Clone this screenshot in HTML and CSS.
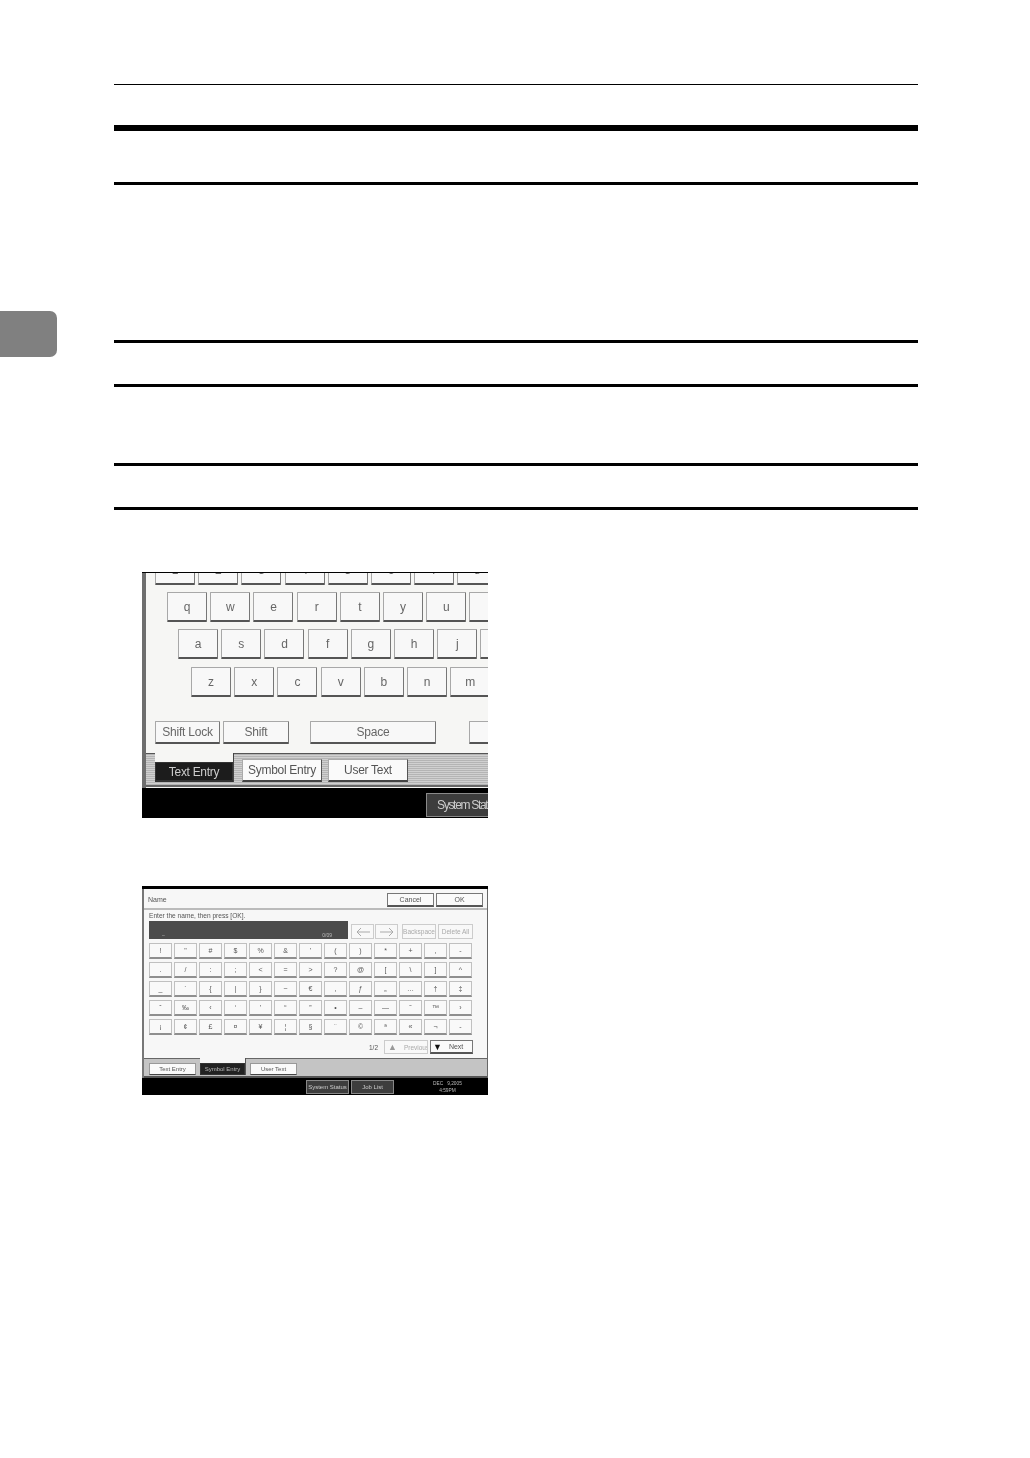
FILE: index.html
```html
<!DOCTYPE html>
<html lang="en">
<head>
<meta charset="utf-8">
<title>Symbol Entry</title>
<link rel="stylesheet" href="styles.css">
</head>
<body>
<div class="page">
  <aside class="gutter"><div class="thumb-tab"></div></aside>
  <main class="content">
    <div class="rule thin"></div>
    <div class="rule heavy"></div>
    <div class="rule r1"></div>
    <div class="rule r2"></div>
    <div class="rule r3"></div>
    <div class="rule r4"></div>
    <div class="rule r5"></div>

    <section class="screen big">
      <div class="panel">
        <div class="kb-row row1"><span class="key">1</span><span class="key">2</span><span class="key">3</span><span class="key">4</span><span class="key">5</span><span class="key">6</span><span class="key">7</span><span class="key">8</span></div>
        <div class="kb-row row2"><span class="key">q</span><span class="key">w</span><span class="key">e</span><span class="key">r</span><span class="key">t</span><span class="key">y</span><span class="key">u</span><span class="key"></span></div>
        <div class="kb-row row3"><span class="key">a</span><span class="key">s</span><span class="key">d</span><span class="key">f</span><span class="key">g</span><span class="key">h</span><span class="key">j</span><span class="key"></span></div>
        <div class="kb-row row4"><span class="key">z</span><span class="key">x</span><span class="key">c</span><span class="key">v</span><span class="key">b</span><span class="key">n</span><span class="key">m</span></div>
        <div class="mod-row">
          <span class="key lock">Shift Lock</span>
          <span class="key shift">Shift</span>
          <span class="key space">Space</span>
          <span class="key extra"></span>
        </div>
        <div class="tabbar">
          <div class="notch"><span class="tab on">Text Entry</span></div>
          <span class="tab sym">Symbol Entry</span>
          <span class="tab usr">User Text</span>
        </div>
      </div>
      <div class="status"><span class="status-btn">System Status</span></div>
    </section>

    <section class="screen small">
      <div class="panel">
        <header class="title">
          <span class="title-name">Name</span>
          <span class="act cancel">Cancel</span>
          <span class="act ok">OK</span>
        </header>
        <div class="body">
          <div class="prompt">Enter the name, then press [OK].</div>
          <div class="entry-row">
            <div class="entry"><span>–</span><span class="count">0/09</span></div>
            <span class="soft arrow"><svg viewBox="0 0 16 10" class="arrow-icon"><path d="M15 5H2M6 1 2 5l4 4"/></svg></span>
            <span class="soft arrow"><svg viewBox="0 0 16 10" class="arrow-icon"><path d="M1 5h13M10 1l4 4-4 4"/></svg></span>
            <span class="soft back">Backspace</span>
            <span class="soft del">Delete All</span>
          </div>
          <div class="sym-grid">
            <span class="k">!</span><span class="k">"</span><span class="k">#</span><span class="k">$</span><span class="k">%</span><span class="k">&amp;</span><span class="k">'</span><span class="k">(</span><span class="k">)</span><span class="k">*</span><span class="k">+</span><span class="k">,</span><span class="k">-</span>
            <span class="k">.</span><span class="k">/</span><span class="k">:</span><span class="k">;</span><span class="k">&lt;</span><span class="k">=</span><span class="k">&gt;</span><span class="k">?</span><span class="k">@</span><span class="k">[</span><span class="k">\</span><span class="k">]</span><span class="k">^</span>
            <span class="k">_</span><span class="k">`</span><span class="k">{</span><span class="k">|</span><span class="k">}</span><span class="k">~</span><span class="k">€</span><span class="k">‚</span><span class="k">ƒ</span><span class="k">„</span><span class="k">…</span><span class="k">†</span><span class="k">‡</span>
            <span class="k">ˆ</span><span class="k">‰</span><span class="k">‹</span><span class="k">‘</span><span class="k">’</span><span class="k">“</span><span class="k">”</span><span class="k">•</span><span class="k">–</span><span class="k">—</span><span class="k">˜</span><span class="k">™</span><span class="k">›</span>
            <span class="k">¡</span><span class="k">¢</span><span class="k">£</span><span class="k">¤</span><span class="k">¥</span><span class="k">¦</span><span class="k">§</span><span class="k">¨</span><span class="k">©</span><span class="k">ª</span><span class="k">«</span><span class="k">¬</span><span class="k">-</span>
          </div>
          <div class="pager">
            <span class="page-no">1/2</span>
            <span class="soft prev"><b class="tri">▲</b>Previous</span>
            <span class="act next"><b class="tri dark">▼</b>Next</span>
          </div>
        </div>
        <div class="tabbar2">
          <span class="tab2">Text Entry</span>
          <div class="notch2"><span class="tab2 on">Symbol Entry</span></div>
          <span class="tab2">User Text</span>
        </div>
      </div>
      <div class="status2">
        <span class="status-btn2">System Status</span>
        <span class="status-btn2">Job List</span>
        <span class="clock">DEC&nbsp;&nbsp;&nbsp;9,2005<br>4:59PM</span>
      </div>
    </section>
  </main>
</div>
</body>
</html>
```
FILE: styles.css
```css
* { box-sizing: border-box; }
html, body { margin: 0; background: #fff; }
body { font-family: "Liberation Sans", "DejaVu Sans", sans-serif; color: #333; }

.page { display: flex; min-height: 1458px; }
.gutter { width: 114px; flex: none; padding-top: 311px; }
.thumb-tab { width: 57px; height: 46px; background: #808080; border-radius: 0 7px 7px 0; }
.content { width: 804px; flex: none; padding-top: 84px; }

.rule { background: #000; height: 3px; }
.thin { height: 1px; }
.heavy { height: 6px; margin-top: 40px; }
.r1 { margin-top: 51px; }
.r2 { margin-top: 155px; }
.r3 { margin-top: 41px; }
.r4 { margin-top: 76px; }
.r5 { margin-top: 41px; }

.screen { margin-left: 28px; width: 346px; overflow: hidden; background: #000; display: flex; flex-direction: column; filter: blur(0.45px); }
.big { height: 246px; margin-top: 62px; }
.small { height: 209px; margin-top: 68px; }

/* Close-up of the keyboard */
.big .panel { height: 215px; flex: none; margin-top: 1px; background: #f6f6f4; border-left: 4px solid #6e6e6e; overflow: hidden; }
.kb-row { display: flex; gap: 3.2px; height: 30px; margin-top: 7px; }
.row1 { margin-top: -18px; padding-left: 9px; }
.row2 { padding-left: 21px; }
.row3 { padding-left: 32px; }
.row4 { margin-top: 8px; padding-left: 45px; }
.key { flex: none; width: 40px; display: flex; align-items: center; justify-content: center; background: #f8f8f8; border: 1px solid #a8a8a8; border-right-color: #777; border-bottom: 2px solid #555; border-radius: 1px; font-size: 12px; color: #666; white-space: nowrap; letter-spacing: -0.2px; }
.mod-row { display: flex; height: 23px; margin-top: 24px; padding-left: 9px; }
.lock { width: 65px; margin-right: 3px; }
.shift { width: 66px; margin-right: 21px; }
.space { width: 126px; margin-right: 33px; }
.extra { width: 30px; }

.tabbar { height: 34px; margin-top: 9px; display: flex; align-items: flex-start; border-top: 1px solid #555; border-bottom: 2px solid #666; padding-left: 9px; background: repeating-linear-gradient(#b4b4b4 0 1px, #d0d0d0 1px 2px); }
.notch { width: 79px; height: 29px; margin-top: -1px; padding-top: 9px; background: #f6f6f4; border-right: 1px solid #444; flex: none; }
.tab { display: flex; align-items: center; justify-content: center; height: 23px; width: 80px; background: #fafafa; border: 1px solid #aaa; border-right-color: #555; border-bottom: 2px solid #444; font-size: 12px; color: #555; white-space: nowrap; letter-spacing: -0.3px; }
.tab.on { width: 78px; height: 20px; background: #1c1c1c; border-color: #333; color: #ccc; }
.sym { margin: 5px 6px 0 8px; flex: none; }
.usr { margin-top: 5px; flex: none; }
.status { flex: 1; padding: 5px 0 0 284px; overflow: hidden; }
.status-btn { display: flex; align-items: center; padding-left: 10px; width: 90px; height: 24px; background: #3d3d3d; border: 1px solid #8a8a8a; color: #ccc; font-size: 12px; letter-spacing: -1.3px; white-space: nowrap; }

/* Symbol entry screen */
.small .panel { height: 189px; flex: none; margin-top: 3px; background: #f7f7f7; border-left: 2px solid #777; border-right: 1px solid #666; display: flex; flex-direction: column; }
.title { height: 21px; flex: none; display: flex; align-items: center; padding: 2px 4px 0 4px; border-bottom: 2px solid #bbb; font-size: 7px; color: #555; }
.title-name { flex: 1; }
.act { display: flex; align-items: center; justify-content: center; background: #fafafa; border: 1px solid #777; border-bottom: 2px solid #555; font-size: 7px; color: #555; }
.cancel { width: 47px; height: 14px; margin-right: 2px; }
.ok { width: 47px; height: 14px; }
.body { flex: 1; padding: 0 13px 0 5px; }
.prompt { font-size: 6.6px; height: 11px; line-height: 12px; color: #555; white-space: nowrap; }
.entry-row { display: flex; align-items: flex-end; height: 18px; }
.entry { width: 199px; height: 18px; flex: none; display: flex; justify-content: space-between; align-items: flex-end; padding: 0 16px 1px 13px; background: #4b4b4b; color: #bbb; font-size: 5px; }
.soft { display: flex; align-items: center; justify-content: center; height: 15px; background: #f8f8f8; border: 1px solid #ccc; font-size: 6.5px; color: #aaa; white-space: nowrap; overflow: hidden; }
.arrow { width: 23px; margin-left: 3px; }
.arrow + .arrow { margin-left: 1px; }
.arrow-icon { width: 16px; height: 10px; fill: none; stroke: #aaa; stroke-width: 1; }
.back { width: 34px; margin-left: 4px; }
.del { width: 35px; margin-left: 2px; }
.sym-grid { display: grid; grid-template-columns: repeat(13, 23px); column-gap: 2px; grid-auto-rows: 16px; row-gap: 3px; margin-top: 4px; }
.k { display: flex; align-items: center; justify-content: center; background: #f9f9f9; border: 1px solid #c0c0c0; border-bottom: 2px solid #8f8f8f; font-size: 7px; color: #555; }
.pager { display: flex; align-items: center; height: 14px; margin-top: 5px; padding-left: 220px; font-size: 6.5px; color: #555; }
.page-no { width: 15px; }
.prev { width: 44px; height: 14px; margin-right: 2px; justify-content: flex-start; padding-left: 3px; }
.next { width: 43px; height: 14px; justify-content: flex-start; padding-left: 2px; }
.tri { font-size: 9px; font-weight: 400; color: #999; margin-right: 7px; }
.tri.dark { color: #111; margin-right: 7px; }
.tabbar2 { height: 20px; flex: none; display: flex; align-items: flex-start; gap: 4px; padding: 4px 0 0 5px; background: #c4c4c4; border-top: 1px solid #666; border-bottom: 2px solid #555; }
.tab2 { flex: none; display: flex; align-items: center; justify-content: center; width: 47px; height: 12px; background: #fafafa; border: 1px solid #999; border-bottom-color: #444; font-size: 6px; color: #555; white-space: nowrap; }
.notch2 { flex: none; width: 46px; height: 17px; margin-top: -5px; padding-top: 5px; background: #f7f7f7; border-right: 1px solid #555; }
.tab2.on { width: 45px; background: #222; border-color: #333; color: #bbb; }
.status2 { flex: 1; display: flex; gap: 2px; padding: 2px 0 0 164px; }
.status-btn2 { display: flex; align-items: center; justify-content: center; width: 43px; height: 14px; background: #3d3d3d; border: 1px solid #888; color: #ccc; font-size: 6px; white-space: nowrap; }
.clock { margin-left: 37px; color: #bbb; font-size: 4.8px; line-height: 7px; text-align: center; white-space: nowrap; }
```
